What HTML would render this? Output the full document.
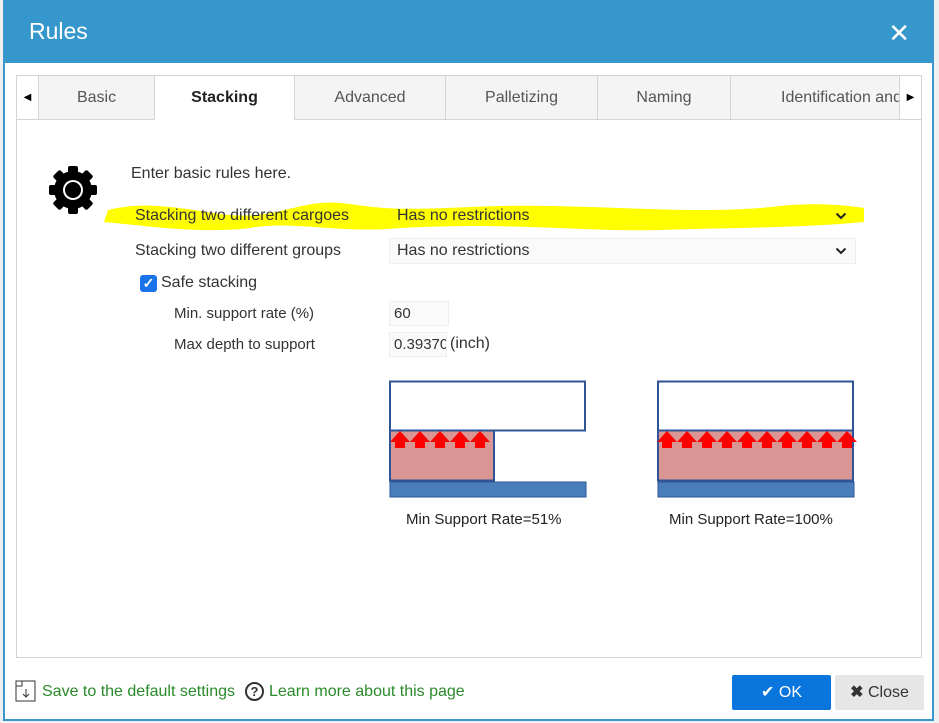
<!DOCTYPE html>
<html><head><style>
*{box-sizing:border-box;margin:0;padding:0}
body{width:939px;height:723px;background:#f0f0f0;font-family:"Liberation Sans",sans-serif;position:relative;overflow:hidden}
.dlg{position:absolute;left:3px;top:0;width:931px;height:721px;background:#fff;border:2px solid #3a97cc;border-top:none}
.hdr{position:absolute;left:0;top:0;width:100%;height:63px;background:#3597cc;color:#fff}
.hdr .t{position:absolute;left:24px;top:18px;font-size:23px}
.hdr .x{position:absolute;right:22px;top:20px;font-size:26px;line-height:26px}
.a{position:absolute}
.panel{position:absolute;left:16px;top:75px;width:906px;height:583px;border:1px solid #d4d4d4}
.tab{position:absolute;top:75px;height:45px;background:#f4f4f4;border:1px solid #d4d4d4;color:#555;font-size:16px;text-align:center;line-height:44px}
.t16{font-size:16px;color:#333}
.sel{position:absolute;left:389px;width:467px;height:26px;border:1px solid #eee;background:#fafafa;font-size:16px;color:#333;padding-left:7px;line-height:24px}
.chev{position:absolute;right:8px;top:8px}
.inp{position:absolute;left:389px;width:60px;height:25px;border:1px solid #eee;background:#fafafa;font-size:15px;color:#333;padding-left:4px;line-height:23px;overflow:hidden;white-space:nowrap}
.lbl{font-family:"Liberation Sans","NanumGothic",sans-serif;font-size:15px;color:#222}
</style></head><body>
<div class="dlg">
<div class="hdr"><div class="t">Rules</div><div class="x">✕</div></div>
</div>
<div class="panel"></div>
<div class="tab" style="left:16px;width:23px;background:#fff;font-size:10px;color:#000">◀</div>
<div class="tab" style="left:38px;width:117px">Basic</div>
<div class="tab" style="left:154px;width:141px;background:#fff;border-bottom-color:#fff;font-weight:bold;color:#222">Stacking</div>
<div class="tab" style="left:294px;width:152px">Advanced</div>
<div class="tab" style="left:445px;width:153px">Palletizing</div>
<div class="tab" style="left:597px;width:134px">Naming</div>
<div class="tab" style="left:730px;width:170px;overflow:hidden;text-align:left;padding-left:50px;white-space:nowrap">Identification and</div>
<div class="tab" style="left:899px;width:23px;background:#fff;font-size:10px;color:#000">▶</div>

<svg class="a" style="left:48px;top:164px" width="50" height="52" viewBox="0 0 50 52">
<g fill="#000" transform="translate(25,26)">
<circle r="19"/>
<g id="tt"><rect x="-5" y="-24" width="10" height="10" rx="2"/></g>
<use href="#tt" transform="rotate(45)"/><use href="#tt" transform="rotate(90)"/><use href="#tt" transform="rotate(135)"/><use href="#tt" transform="rotate(180)"/><use href="#tt" transform="rotate(225)"/><use href="#tt" transform="rotate(270)"/><use href="#tt" transform="rotate(315)"/>
<circle r="10" fill="#fff"/><circle r="8" fill="#000"/>
</g></svg>

<svg class="a" style="left:100px;top:192px" width="770" height="45"><path d="M8 18 C40 10 70 14 120 22 C180 30 200 4 250 12 C300 20 330 16 400 14 C500 12 600 24 680 14 C720 10 750 14 764 16 L764 30 C700 36 620 36 560 38 C480 40 420 30 300 36 C240 42 190 28 150 36 C100 42 50 34 4 30 Z" fill="#ffff00"/></svg>

<div class="a t16" style="left:131px;top:165px">Enter basic rules here.</div>
<div class="a t16" style="left:135px;top:207px">Stacking two different cargoes</div>
<div class="sel" style="top:203px;background:transparent;border-color:transparent">Has no restrictions<svg class="chev" width="12" height="8"><path d="M1.5 1.5 L6 6 L10.5 1.5" stroke="#222" stroke-width="2" fill="none"/></svg></div>
<div class="a t16" style="left:135px;top:242px">Stacking two different groups</div>
<div class="sel" style="top:238px">Has no restrictions<svg class="chev" width="12" height="8"><path d="M1.5 1.5 L6 6 L10.5 1.5" stroke="#222" stroke-width="2" fill="none"/></svg></div>
<div class="a" style="left:140px;top:275px;width:17px;height:17px;background:#1a73e8;border-radius:3px;color:#fff;font-size:14px;text-align:center;line-height:17px;font-weight:bold">✓</div>
<div class="a t16" style="left:161px;top:274px">Safe stacking</div>
<div class="a t16" style="left:174px;top:305px;font-size:15px">Min. support rate (%)</div>
<div class="inp" style="top:301px">60</div>
<div class="a t16" style="left:174px;top:336px;font-size:15px">Max depth to support</div>
<div class="inp" style="top:332px;width:58px">0.39370</div>
<div class="a t16" style="left:450px;top:335px">(inch)</div>

<svg class="a" style="left:388px;top:380px" width="470" height="120">
<rect x="2" y="1.5" width="195" height="49" fill="#fff" stroke="#2f5597" stroke-width="2"/>
<rect x="2" y="50.5" width="104" height="50" fill="#d99694" stroke="#2f5597" stroke-width="2"/>
<rect x="2" y="102" width="196" height="15" fill="#4a7ebb" stroke="#2f5597" stroke-width="1"/>
<defs><path id="one" d="M0 62 L10 51 L20 62 L15 62 L15 68 L5 68 L5 62 Z"/></defs>
<g fill="#f00" id="ar"><use href="#one" x="2"/><use href="#one" x="22"/><use href="#one" x="42"/><use href="#one" x="62"/><use href="#one" x="82"/></g>
<rect x="270" y="1.5" width="195" height="49" fill="#fff" stroke="#2f5597" stroke-width="2"/>
<rect x="270" y="50.5" width="195" height="50" fill="#d99694" stroke="#2f5597" stroke-width="2"/>
<rect x="270" y="102" width="196" height="15" fill="#4a7ebb" stroke="#2f5597" stroke-width="1"/>
<use href="#ar" x="267"/><use href="#ar" x="367"/>
</svg>
<div class="a lbl" style="left:406px;top:511px">Min Support Rate=51%</div>
<div class="a lbl" style="left:669px;top:511px">Min Support Rate=100%</div>

<svg class="a" style="left:15px;top:680px" width="22" height="22"><rect x="1" y="1" width="19" height="20" fill="#fff" stroke="#333"/><rect x="1" y="1" width="6" height="5" fill="none" stroke="#333"/><path d="M11 9 V17 M8 14 L11 17 L14 14" stroke="#333" fill="none"/></svg>
<div class="a" style="left:42px;top:683px;font-size:16px;color:#2a8a2a">Save to the default settings</div>
<div class="a" style="left:245px;top:682px;width:19px;height:19px;border:2px solid #333;border-radius:50%;font-size:13px;font-weight:bold;text-align:center;line-height:15px;color:#333">?</div>
<div class="a" style="left:269px;top:683px;font-size:16px;color:#2a8a2a">Learn more about this page</div>
<div class="a" style="left:732px;top:675px;width:99px;height:35px;background:#0a75dc;border-radius:2px;color:#fff;font-size:16px;text-align:center;line-height:35px">✔ OK</div>
<div class="a" style="left:835px;top:675px;width:89px;height:35px;background:#e6e6e6;border-radius:2px;color:#333;font-size:16px;text-align:center;line-height:35px"><b>✖</b> Close</div>
</body></html>
